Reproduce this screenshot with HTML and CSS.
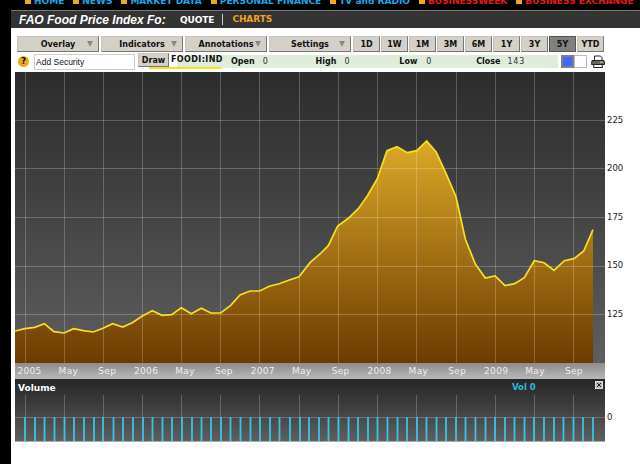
FILE: index.html
```html
<!DOCTYPE html>
<html lang="en">
<head>
    <meta charset="UTF-8">
    <title>FAO Food Price Index</title>
    <link rel="stylesheet" href="styles.css">
</head>
<body>
    <!-- Site nav, cut off by the top of the window -->
    <div class="site-nav">
        <a class="nav-item"><i></i>HOME</a>
        <a class="nav-item"><i></i>NEWS</a>
        <a class="nav-item"><i></i>MARKET DATA</a>
        <a class="nav-item"><i></i>PERSONAL FINANCE</a>
        <a class="nav-item"><i></i>TV and RADIO</a>
        <a class="nav-item red"><i></i>BUSINESSWEEK</a>
        <a class="nav-item red"><i></i>BUSINESS EXCHANGE</a>
    </div>

    <div class="panel">
        <div class="panel-header">
            <span class="panel-title">FAO Food Price Index Fo:</span>
            <span class="tab">QUOTE</span>
            <span class="tab active">CHARTS</span>
        </div>

        <div class="toolbar">
            <button class="btn menu">Overlay<i class="arrow"></i></button>
            <button class="btn menu">Indicators<i class="arrow"></i></button>
            <button class="btn menu">Annotations<i class="arrow"></i></button>
            <button class="btn menu">Settings<i class="arrow"></i></button>
            <button class="btn range">1D</button>
            <button class="btn range">1W</button>
            <button class="btn range">1M</button>
            <button class="btn range">3M</button>
            <button class="btn range">6M</button>
            <button class="btn range">1Y</button>
            <button class="btn range">3Y</button>
            <button class="btn range selected">5Y</button>
            <button class="btn range">YTD</button>
        </div>

        <div class="security-row">
            <span class="help">?</span>
            <input class="security-input" type="text" value="Add Security">
            <button class="btn draw">Draw</button>
            <span class="series-tag">FOODI:IND</span>
            <div class="stats">
                <b class="stat-open">Open</b><span class="stat-value">0</span>
                <b class="stat-high">High</b><span class="stat-value">0</span>
                <b class="stat-low">Low</b><span class="stat-value">0</span>
                <b class="stat-close">Close</b><span class="stat-value">143</span>
            </div>
            <div class="swatches">
                <span class="swatch on"><i></i></span>
                <span class="swatch"></span>
            </div>
            <svg class="printer" width="14" height="13" viewBox="0 0 14 13">
                <path d="M3.500 5V1h6l1.500 1.500V5" fill="#fff" stroke="#222"/>
                <path d="M1 5.500h12l.5 4h-13z" fill="#666" stroke="#222"/>
                <rect x="9" y="6.500" width="3" height="1" fill="#e8d030"/>
                <path d="M3 9.500h8l.5 3h-9z" fill="#fff" stroke="#222"/>
            </svg>
        </div>

        <svg class="price-chart" width="625" height="291" viewBox="15 72 625 291">
            <defs>
                <linearGradient id="plot-bg" x1="0" y1="0" x2="0" y2="1">
                    <stop offset="0" stop-color="#2c2c2c"/>
                    <stop offset="1" stop-color="#5e5e5e"/>
                </linearGradient>
                <linearGradient id="area-fill" gradientUnits="userSpaceOnUse" x1="0" y1="140" x2="0" y2="363">
                    <stop offset="0" stop-color="#dcaa28"/>
                    <stop offset="1" stop-color="#6c3a00"/>
                </linearGradient>
            </defs>
            <rect x="15" y="72" width="590" height="291" fill="url(#plot-bg)"/>
            <polygon fill="url(#area-fill)" points="15,331 25,328.700 34.700,327.300 44.300,323.700 54,331.700 64,333 73.700,328.700 83.300,330.700 93.300,332 103,328.300 112.700,323.700 122.700,327 132.300,322.700 142.300,316 152.300,310.700 162,315.300 171.700,314.700 181.300,307.700 191.300,313.700 201.300,308.300 210.700,313 220.700,313 230.700,305.300 240,295 250,291 259.700,291 269.300,286.300 279.300,283.700 289.300,280 299,276.700 310,262.700 320,254 328.300,245.700 337.700,226 348.300,218.300 358.300,208.700 367.300,196 377.300,178.700 387,150.700 397,146.700 407.300,152.700 416.700,150.700 426.700,141 436.300,152.300 446,173.300 456,196.700 465.300,239 475.300,264 485.300,278 495,276 505,285.700 514.700,283.700 524.300,277.700 534.300,260.700 544,262.700 554,270.300 564.300,260.700 574,258.700 583.700,251 593,229.700 593,363 15,363"/>
            <path class="grid" d="M25.500 72V363M64.500 72V363M103.500 72V363M142.500 72V363M181.500 72V363M220.500 72V363M259.500 72V363M299.500 72V363M338.500 72V363M377.500 72V363M416.500 72V363M456.500 72V363M495.500 72V363M534.500 72V363M573.500 72V363M15 120.500H605M15 168.500H605M15 217.500H605M15 266.500H605M15 314.500H605"/>
            <polyline class="price-line" points="15,331 25,328.700 34.700,327.300 44.300,323.700 54,331.700 64,333 73.700,328.700 83.300,330.700 93.300,332 103,328.300 112.700,323.700 122.700,327 132.300,322.700 142.300,316 152.300,310.700 162,315.300 171.700,314.700 181.300,307.700 191.300,313.700 201.300,308.300 210.700,313 220.700,313 230.700,305.300 240,295 250,291 259.700,291 269.300,286.300 279.300,283.700 289.300,280 299,276.700 310,262.700 320,254 328.300,245.700 337.700,226 348.300,218.300 358.300,208.700 367.300,196 377.300,178.700 387,150.700 397,146.700 407.300,152.700 416.700,150.700 426.700,141 436.300,152.300 446,173.300 456,196.700 465.300,239 475.300,264 485.300,278 495,276 505,285.700 514.700,283.700 524.300,277.700 534.300,260.700 544,262.700 554,270.300 564.300,260.700 574,258.700 583.700,251 593,229.700"/>
            <text class="axis-label" x="607" y="123">225</text>
            <text class="axis-label" x="607" y="171">200</text>
            <text class="axis-label" x="607" y="220">175</text>
            <text class="axis-label" x="607" y="268">150</text>
            <text class="axis-label" x="607" y="317">125</text>
        </svg>

        <div class="time-axis">
            <span>2005</span><span>May</span><span>Sep</span>
            <span>2006</span><span>May</span><span>Sep</span>
            <span>2007</span><span>May</span><span>Sep</span>
            <span>2008</span><span>May</span><span>Sep</span>
            <span>2009</span><span>May</span><span>Sep</span>
        </div>

        <svg class="volume-chart" width="625" height="63" viewBox="15 379 625 63">
            <defs>
                <linearGradient id="volume-bg" x1="0" y1="0" x2="0" y2="1">
                    <stop offset="0" stop-color="#262626"/>
                    <stop offset="1" stop-color="#5e5e5e"/>
                </linearGradient>
            </defs>
            <rect x="15" y="379" width="590" height="62" fill="url(#volume-bg)"/>
            <rect x="15" y="441" width="590" height="1" fill="#aaa"/>
            <path class="grid" d="M25.500 395V441M64.500 395V441M103.500 395V441M142.500 395V441M181.500 395V441M220.500 395V441M259.500 395V441M299.500 395V441M338.500 395V441M377.500 395V441M416.500 395V441M456.500 395V441M495.500 395V441M534.500 395V441M573.500 395V441M15 417.500H605"/>
            <path class="volume-bars" d="M25 417V441M35 417V441M44.500 417V441M54.500 417V441M64.500 417V441M74 417V441M84 417V441M94 417V441M103 417V441M113.500 417V441M123 417V441M133 417V441M143 417V441M152.500 417V441M162.500 417V441M172 417V441M182 417V441M192 417V441M201.500 417V441M211 417V441M221 417V441M230.500 417V441M240.500 417V441M250.500 417V441M260 417V441M270 417V441M279.500 417V441M290 417V441M300 417V441M309 417V441M319 417V441M328.500 417V441M338.500 417V441M348.500 417V441M358 417V441M368 417V441M377.500 417V441M387.500 417V441M397.500 417V441M407 417V441M417 417V441M426.500 417V441M436.500 417V441M446 417V441M456 417V441M465.500 417V441M475.500 417V441M485.500 417V441M495 417V441M505 417V441M514.500 417V441M524.500 417V441M534 417V441M544 417V441M554 417V441M563.500 417V441M573.500 417V441M583 417V441M593 417V441"/>
            <text class="volume-title" x="18" y="391">Volume</text>
            <text class="volume-value" x="512" y="390">Vol 0</text>
            <text class="axis-label" x="607" y="420">0</text>
            <rect x="595.500" y="381.500" width="7" height="7" fill="#bbb" stroke="#ddd"/>
            <path d="M597 383l4 4M601 383l-4 4" stroke="#222"/>
        </svg>
    </div>
</body>
</html>
```

FILE: styles.css
```css
* {
    margin: 0;
    padding: 0;
    box-sizing: border-box;
}

html, body {
    height: 464px;
    overflow: hidden;
}

body {
    background-color: #000;
    font-family: "DejaVu Sans", sans-serif;
    display: flex;
    flex-direction: column;
}

.site-nav {
    height: 10px;
    flex: none;
    padding-left: 25px;
    display: flex;
    gap: 9px;
    overflow: hidden;
    font-size: 9px;
    font-weight: bold;
    line-height: 12px;
    white-space: nowrap;
    color: #1ba8e8;
}

.nav-item {
    display: flex;
    align-items: flex-start;
    gap: 3px;
    flex: none;
    margin-top: -5px;
}

.nav-item i {
    width: 6px;
    height: 9px;
    background-color: #f0a818;
}

.nav-item.red {
    color: #e81818;
}

.panel {
    flex: 1;
    margin-left: 11px;
    background-color: #fff;
    display: flex;
    flex-direction: column;
    min-width: 0;
}

.panel-header {
    height: 18px;
    flex: none;
    background-color: #333;
    border-top: 1px solid #777;
    display: flex;
    align-items: center;
    color: #fff;
    font-weight: bold;
    white-space: nowrap;
}

.panel-title {
    width: 169px;
    padding-left: 8px;
    font-family: "Liberation Sans", sans-serif;
    font-style: italic;
    font-size: 12px;
}

.tab {
    font-size: 9px;
    letter-spacing: -0.1px;
    padding-right: 8px;
}

.tab.active {
    color: #f0a020;
    border-left: 1px solid #ccc;
    padding-left: 9px;
    line-height: 11px;
}

.toolbar {
    margin-top: 8px;
    padding-left: 6px;
    display: flex;
    gap: 1px;
    height: 16px;
    flex: none;
}

.btn {
    background-color: #d4d0c8;
    border: 1px solid #c8c4bc;
    border-right-color: #777;
    border-bottom-color: #777;
    font-family: "DejaVu Sans", sans-serif;
    font-size: 8px;
    font-weight: bold;
    color: #111;
    white-space: nowrap;
}

.menu {
    position: relative;
    width: 82px;
    margin-right: 1px;
}

.arrow {
    position: absolute;
    right: 5px;
    top: 4px;
    border-left: 3px solid transparent;
    border-right: 3px solid transparent;
    border-top: 6px solid #888;
}

.range {
    width: 27px;
}

.range.selected {
    background-color: #808080;
    border-color: #555;
}

.security-row {
    position: relative;
    height: 17px;
    margin-top: 1px;
    flex: none;
    display: flex;
    align-items: center;
}

.help {
    width: 11px;
    height: 11px;
    margin-left: 7px;
    border-radius: 50%;
    background-color: #f0a818;
    color: #111;
    font-size: 9px;
    font-weight: bold;
    line-height: 11px;
    text-align: center;
}

.security-input {
    width: 101px;
    height: 16px;
    margin-left: 5px;
    padding-left: 1px;
    border: 1px solid #ccc;
    font-family: "Liberation Sans", sans-serif;
    font-size: 8.500px;
    color: #111;
    outline: none;
}

.draw {
    align-self: flex-start;
    width: 31px;
    height: 14px;
    margin-left: 3px;
}

/* Sits over the start of the stats band and the foot of Draw */
.series-tag {
    position: absolute;
    left: 138px;
    top: 1px;
    width: 72px;
    height: 15px;
    padding-left: 22px;
    border-bottom: 2px solid #f8e020;
    font-size: 8px;
    font-weight: bold;
    letter-spacing: 0.4px;
    line-height: 11px;
    color: #111;
    white-space: nowrap;
}

.stats {
    width: 381px;
    height: 13px;
    margin-left: 8px;
    background-color: #dfecdc;
    display: flex;
    align-items: center;
    font-size: 8px;
    color: #111;
    white-space: nowrap;
}

.stat-value {
    font-size: 8px;
    letter-spacing: 0.8px;
    color: #333;
}

.stat-open {
    margin-left: 54px;
    margin-right: 8px;
}

.stat-high {
    margin-left: 47px;
    margin-right: 8px;
}

.stat-low {
    margin-left: 49px;
    margin-right: 9px;
}

.stat-close {
    margin-left: 44px;
    margin-right: 7px;
}

.swatches {
    display: flex;
    margin-left: 3px;
}

.swatch {
    width: 13px;
    height: 13px;
    border: 1px solid #bbb;
    background-color: #fff;
}

.swatch.on {
    background-color: #808080;
    border-color: #808080;
    padding: 1px;
}

.swatch.on i {
    display: block;
    width: 9px;
    height: 9px;
    background-color: #3f66ff;
}

.printer {
    margin-left: 4px;
}

.price-chart {
    display: block;
    margin: 2px 0 0 4px;
    flex: none;
}

.grid {
    fill: none;
    stroke: rgba(255, 255, 255, 0.22);
}

.price-line {
    fill: none;
    stroke: #f8e020;
    stroke-width: 1.700;
}

.axis-label {
    font-size: 8.500px;
    fill: #222;
}

.time-axis {
    width: 590px;
    height: 16px;
    margin-left: 4px;
    flex: none;
    background: linear-gradient(#8c8c8c, #b8b8b8);
    display: flex;
    align-items: center;
    font-size: 9px;
    letter-spacing: 0.3px;
    color: #eee;
}

.time-axis span {
    flex: 0 0 38.900px;
    text-align: center;
}

.time-axis span:first-child {
    margin-left: -5px;
}

.volume-chart {
    display: block;
    margin-left: 4px;
    flex: none;
}

.volume-bars {
    fill: none;
    stroke: #30c8e8;
    stroke-width: 1.800;
}

.volume-title {
    font-size: 9px;
    font-weight: bold;
    fill: #fff;
}

.volume-value {
    font-size: 8.500px;
    font-weight: bold;
    fill: #30b8e0;
}
```
